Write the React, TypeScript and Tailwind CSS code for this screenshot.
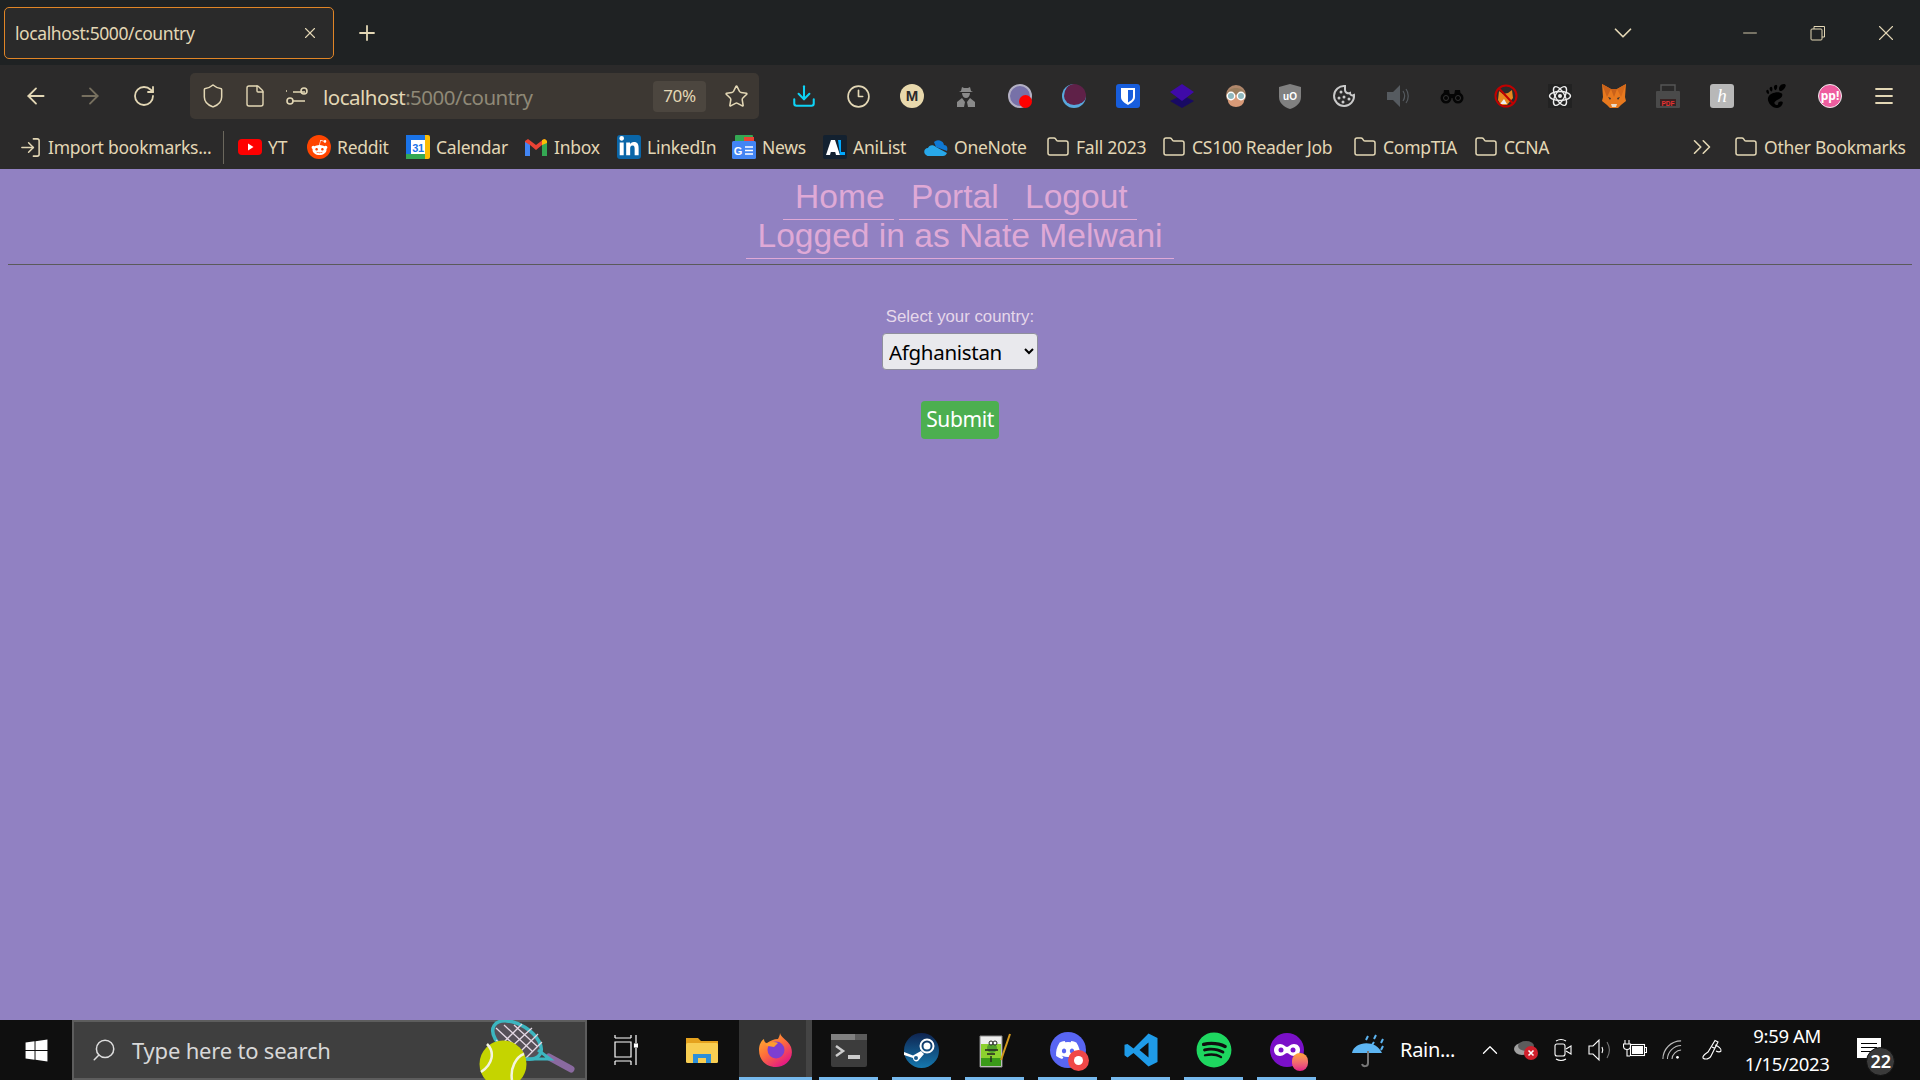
import { ArrowLeft, ArrowRight, RotateCw, Shield, File, Star, Download, Clock3, Menu, Plus, X, Minus, ChevronDown, ChevronsRight, Folder, LogIn, Search, ChevronUp } from 'lucide-react';
import { FaDiscord, FaRedditAlien, FaSpotify, FaWindows, FaLinkedinIn } from 'react-icons/fa';
import { SiGnome } from 'react-icons/si';

const CREAM = '#e3d7b5';

function Svg({ size = 24, children }: { size?: number; children: React.ReactNode }) {
  return <svg width={size} height={size} viewBox="0 0 24 24" fill="none">{children}</svg>;
}

function Bookmark({ icon, label, width }: { icon: React.ReactNode; label: string; width: number }) {
  return (
    <div className="flex items-center gap-[6px] shrink-0">
      <span className="w-[24px] h-[24px] flex items-center justify-center">{icon}</span>
      <span className="whitespace-nowrap" style={{ width }}>{label}</span>
    </div>
  );
}

const folder = <Folder size={24} strokeWidth={1.5} color={CREAM} />;

function TaskSlot({ children, active }: { children: React.ReactNode; active?: boolean }) {
  return (
    <div className={active ? 'relative w-[73px] h-full flex items-center justify-center bg-[#333333]' : 'relative w-[73px] h-full flex items-center justify-center'}>
      {children}
      <div className={active ? 'absolute bottom-0 left-0 right-0 h-[3px] bg-[#76b9ed]' : 'absolute bottom-0 left-[7px] right-[7px] h-[3px] bg-[#76b9ed]'} />
    </div>
  );
}

const ToolIcon = ({ children }: { children: React.ReactNode }) => (
  <div className="w-[54px] flex items-center justify-center shrink-0">{children}</div>
);

export default function App() {
  return (
    <div className="w-[1920px] h-[1080px] flex flex-col overflow-hidden font-['Noto_Sans',sans-serif]" style={{ color: CREAM }}>
      {/* tab strip */}
      <div className="h-[65px] shrink-0 bg-[#1f2223] flex items-center pl-[4px]">
        <div className="w-[330px] h-[52px] rounded-[5px] border border-[#e08526] bg-[#2a2a2a] flex items-center pl-[10px] pr-[14px] justify-between mt-[1px]">
          <span className="text-[17.5px] tracking-[-0.4px]">localhost:5000/country</span>
          <X size={18} strokeWidth={1.5} />
        </div>
        <div className="ml-[21px]"><Plus size={24} strokeWidth={1.8} /></div>
        <div className="ml-auto flex items-center">
          <ChevronDown size={30} strokeWidth={1.4} />
          <div className="w-[68px] ml-[78px] flex justify-center"><Minus size={22} strokeWidth={1} /></div>
          <div className="w-[68px] flex justify-center">
            <svg width="16" height="16" viewBox="0 0 16 16" fill="none" stroke={CREAM}><rect x="1" y="4" width="11" height="11" rx="1" /><path d="M4 4V1.5h10.5V12H12" /></svg>
          </div>
          <div className="w-[68px] flex justify-center"><X size={26} strokeWidth={1} /></div>
        </div>
      </div>

      {/* toolbar */}
      <div className="h-[62px] shrink-0 bg-[#2b2a2a] flex items-center pl-[9px]">
        <ToolIcon><ArrowLeft size={26} strokeWidth={1.7} /></ToolIcon>
        <ToolIcon><ArrowRight size={26} strokeWidth={1.7} color="#77705f" /></ToolIcon>
        <ToolIcon><RotateCw size={24} strokeWidth={1.8} /></ToolIcon>
        <div className="ml-[19px] w-[569px] h-[46px] shrink-0 rounded-[5px] bg-[#3d3833] flex items-center pl-[2px]">
          <div className="w-[42px] flex justify-center"><Shield size={26} strokeWidth={1.4} /></div>
          <div className="w-[42px] flex justify-center"><File size={24} strokeWidth={1.4} /></div>
          <div className="w-[42px] flex justify-center">
            <svg width="24" height="24" viewBox="0 0 24 24" fill="none" stroke={CREAM} strokeWidth="1.6"><path d="M2 9h12M2 18h12" transform="translate(6 -1)" /><circle cx="19" cy="7" r="3" /><circle cx="5" cy="17" r="3" /><path d="M1 7h1" /></svg>
          </div>
          <span className="ml-[5px] pt-[3px] text-[20.5px] tracking-[-0.5px] whitespace-nowrap">localhost<span className="text-[#8f8977]">:5000/country</span></span>
          <div className="ml-auto w-[53px] h-[31px] rounded-[4px] bg-[#4c463f] flex items-center justify-center text-[17px] tracking-[-0.3px]">70%</div>
          <div className="w-[53px] flex justify-center pl-[7px]"><Star size={25} strokeWidth={1.5} /></div>
        </div>
        <div className="ml-[18px] flex items-center">
          <ToolIcon><Download size={26} strokeWidth={1.9} color="#0ed2f5" /></ToolIcon>
          <ToolIcon><Clock3 size={25} strokeWidth={1.6} /></ToolIcon>
          <ToolIcon>
            <div className="w-[24px] h-[24px] rounded-full bg-[#e8d8ac] flex items-center justify-center text-[#2b2a2a] text-[15px] font-bold font-['Liberation_Sans',sans-serif]">M</div>
          </ToolIcon>
          <ToolIcon>
            <Svg><g fill="#8a8a8a"><path d="M7 7l1-4 2 1h4l2-1 1 4 2 1H5z" /><path d="M8 9h8c0 3-2 5-4 5s-4-2-4-5z" /><path d="M3 23v-5l5-4 3 4-1 5zM21 23v-5l-5-4-3 4 1 5z" /></g></Svg>
          </ToolIcon>
          <ToolIcon>
            <div className="relative w-[24px] h-[24px] rounded-full bg-[#7771a8] border-2 border-[#b3b0c4] blur-[0.6px]">
              <div className="absolute right-[-2px] bottom-[-2px] w-[13px] h-[13px] rounded-full bg-[#ff0000]" />
            </div>
          </ToolIcon>
          <ToolIcon>
            <div className="w-[24px] h-[24px] rounded-full bg-[#5f2148] border-b-[3px] border-l-[2px] border-b-[#58a8dc] border-l-[#58a8dc] blur-[0.5px]" />
          </ToolIcon>
          <ToolIcon>
            <Svg><rect width="24" height="24" rx="3" fill="#175ddc" /><path d="M5 4h14v9c0 4-4 6-7 8-3-2-7-4-7-8z" fill="#fff" /><path d="M12 6h5v7c0 2.500-2.500 4-5 5.500z" fill="#175ddc" /></Svg>
          </ToolIcon>
          <ToolIcon>
            <Svg><path d="M12 11l12 6-12 7-12-7z" fill="#180a63" /><path d="M12 0l12 8-12 9L0 8z" fill="#3f0aa8" /></Svg>
          </ToolIcon>
          <ToolIcon>
            <Svg><circle cx="12" cy="11" r="10" fill="#b0876b" /><path d="M3 10C4 2 20 2 21 10z" fill="#9a7d5e" /><ellipse cx="12" cy="17" rx="8" ry="6" fill="#d89a78" /><circle cx="7" cy="12" r="3.700" fill="#8fb7bd" stroke="#fff" strokeWidth="1.400" /><circle cx="17" cy="12" r="3.700" fill="#8fb7bd" stroke="#fff" strokeWidth="1.400" /></Svg>
          </ToolIcon>
          <ToolIcon>
            <svg width="22" height="25" viewBox="0 0 22 25"><path d="M11 0l11 3v10c0 6-5 10-11 12C5 23 0 19 0 13V3z" fill="#808080" /><text x="11" y="16" textAnchor="middle" fill="#fff" fontSize="10" fontWeight="700" fontFamily="Liberation Sans">uO</text></svg>
          </ToolIcon>
          <ToolIcon>
            <Svg><path d="M13 2a10 10 0 1 0 9 9c-2 1-4 0-4-2-3 1-5-1-5-3z" stroke="#c9c9c9" strokeWidth="2" /><g fill="#c9c9c9"><circle cx="9" cy="8" r="1.500" /><circle cx="7" cy="14" r="1.500" /><circle cx="12" cy="13" r="1.500" /><circle cx="11" cy="18" r="1.500" /><circle cx="17" cy="15" r="1.500" /></g></Svg>
          </ToolIcon>
          <ToolIcon>
            <Svg><path d="M1 8h6l7-7v22l-7-7H1z" fill="#565b60" /><path d="M17 7c2 3 2 7 0 10M20 5c3 4 3 10 0 14" stroke="#565b60" strokeWidth="1.200" /></Svg>
          </ToolIcon>
          <ToolIcon>
            <Svg><g fill="#050505"><circle cx="6" cy="14" r="5.500" /><circle cx="18" cy="14" r="5.500" /><path d="M4 6h5l1 6H3zM15 6h5l1 6h-7zM9 10h6v4H9z" /></g><circle cx="6" cy="14" r="2.500" stroke="#333" /><circle cx="18" cy="14" r="2.500" stroke="#333" /></Svg>
          </ToolIcon>
          <ToolIcon>
            <Svg><path d="M5 7l4 3 5-1 4-3 1 8-6 7H7l-3-5z" fill="#e8871f" /><path d="M6 20l4-5 3 5z" fill="#eee" /><circle cx="12" cy="12" r="10.500" stroke="#c00000" strokeWidth="2" /><path d="M5 4.500l14 15" stroke="#c00000" strokeWidth="2" /></Svg>
          </ToolIcon>
          <ToolIcon>
            <Svg><rect width="24" height="24" fill="#222" /><g stroke="#eee" strokeWidth="1.400"><ellipse cx="12" cy="12" rx="10.500" ry="4.500" /><ellipse cx="12" cy="12" rx="10.500" ry="4.500" transform="rotate(60 12 12)" /><ellipse cx="12" cy="12" rx="10.500" ry="4.500" transform="rotate(120 12 12)" /></g><circle cx="12" cy="12" r="2" fill="#eee" /></Svg>
          </ToolIcon>
          <ToolIcon>
            <Svg><path d="M0 0l9 5h6l9-5-1 13 1 4-5 4-3 3H8l-3-3-5-4 1-4z" fill="#e8791e" /><path d="M9 5h6l-3 8zM0 0l9 5-4 8z" fill="#c9611a" /><path d="M15 5l9-5-5 13z" fill="#d5691a" /><path d="M9 20h6l-1 3h-4z" fill="#e9dccb" /><path d="M6 13l3 1-1 2zM18 13l-3 1 1 2z" fill="#333" /></Svg>
          </ToolIcon>
          <ToolIcon>
            <Svg><path d="M5 7V1h14v6" stroke="#565656" strokeWidth="1.400" /><rect y="7" width="24" height="17" rx="1" fill="#4a4a4a" /><rect x="4" y="15" width="16" height="7" fill="#3a2222" /><text x="12" y="21.500" textAnchor="middle" fill="#e63333" fontSize="6.500" fontWeight="700" fontFamily="Liberation Sans">PDF</text></Svg>
          </ToolIcon>
          <ToolIcon>
            <div className="w-[24px] h-[24px] rounded-[3px] bg-[#b8b8b8] flex items-center justify-center text-white text-[19px] italic font-['Liberation_Serif',serif]">h</div>
          </ToolIcon>
          <ToolIcon><SiGnome size={24} color="#000" /></ToolIcon>
          <ToolIcon>
            <div className="w-[24px] h-[24px] rounded-full bg-[#ee5d9f] border border-[#eee] flex items-center justify-center text-white text-[12px] font-bold leading-none">pp!</div>
          </ToolIcon>
          <ToolIcon><Menu size={24} strokeWidth={1.8} /></ToolIcon>
        </div>
      </div>

      {/* bookmarks */}
      <div className="h-[42px] shrink-0 bg-[#2b2a2a] flex items-center pl-[18px] pr-[18px] text-[17.5px] tracking-[-0.25px] pb-[2px]">
        <Bookmark icon={<LogIn size={23} strokeWidth={1.6} />} label="Import bookmarks..." width={160} />
        <div className="w-px h-[33px] bg-[#6b675d] ml-[15px] mr-[14px] shrink-0" />
        <div className="flex items-center gap-[18px]">
          <Bookmark
            label="YT"
            width={21}
            icon={<Svg><rect y="4" width="24" height="16" rx="4" fill="#ff0000" /><path d="M10 8.500l5.500 3.500-5.500 3.500z" fill="#fff" /></Svg>}
          />
          <Bookmark
            label="Reddit"
            width={51}
            icon={<div className="w-[24px] h-[24px] rounded-full bg-[#ff4500] flex items-center justify-center"><FaRedditAlien size={17} color="#fff" /></div>}
          />
          <Bookmark
            label="Calendar"
            width={70}
            icon={<Svg><rect width="24" height="24" rx="2" fill="#fbbc04" /><rect x="0" y="0" width="19" height="5" fill="#1a73e8" /><rect x="0" y="0" width="5" height="20" fill="#1a73e8" /><rect x="0" y="19" width="19" height="5" fill="#34a853" /><rect x="5" y="5" width="14" height="14" fill="#fff" /><text x="12" y="16.500" textAnchor="middle" fill="#1a73e8" fontSize="11" fontWeight="700" fontFamily="Liberation Sans">31</text></Svg>}
          />
          <Bookmark
            label="Inbox"
            width={45}
            icon={<Svg><path d="M1 6v15h5V10l6 5 6-5v11h5V6l-3-2-8 6-8-6z" fill="#ea4335" /><path d="M1 7v14h5V10z" fill="#4285f4" /><path d="M23 7v14h-5V10z" fill="#34a853" /><path d="M18 10V5l3-1 2 2v2z" fill="#fbbc04" /></Svg>}
          />
          <Bookmark
            label="LinkedIn"
            width={67}
            icon={<div className="w-[24px] h-[24px] rounded-[3px] bg-[#0a66a8] flex items-center justify-center"><FaLinkedinIn size={22} color="#fff" /></div>}
          />
          <Bookmark
            label="News"
            width={43}
            icon={<Svg><rect x="3" y="0" width="18" height="8" rx="1" fill="#34a853" /><rect x="12" y="2" width="10" height="6" fill="#ea4335" /><rect y="6" width="24" height="18" rx="1.500" fill="#4285f4" /><text x="6" y="20" textAnchor="middle" fill="#fff" fontSize="11" fontWeight="700" fontFamily="Liberation Sans">G</text><path d="M13 12h8M13 15.500h8M13 19h8" stroke="#fff" strokeWidth="1.700" /></Svg>}
          />
          <Bookmark
            label="AniList"
            width={53}
            icon={<Svg><rect width="24" height="24" rx="2" fill="#132130" /><path d="M3 20l5-15h4l5 15h-4l-.8-3H7.800L7 20z" fill="#fff" /><path d="M15 5h3v12h4v3h-5z" fill="#02a9ff" /></Svg>}
          />
          <Bookmark
            label="OneNote"
            width={74}
            icon={<Svg><path d="M10 7a6 6 0 0 1 10 3c3 0 4 3 3 6L12 12z" fill="#0f78d4" /><path d="M2 20c-3-2-2-7 2-7 1-3 5-4 8-1l11 6c-1 2-2 3-4 3H5c-1 0-2 0-3-1z" fill="#28a8ea" /></Svg>}
          />
          <Bookmark icon={folder} label="Fall 2023" width={68} />
          <Bookmark icon={folder} label="CS100 Reader Job" width={143} />
          <Bookmark icon={folder} label="CompTIA" width={73} />
          <Bookmark icon={folder} label="CCNA" width={47} />
        </div>
        <div className="ml-auto flex items-center">
          <ChevronsRight size={30} strokeWidth={1.3} />
          <div className="ml-[17px]"><Bookmark icon={folder} label="Other Bookmarks" width={138} /></div>
        </div>
      </div>

      {/* page */}
      <main className="flex-1 bg-[#9181c2] font-['Liberation_Sans',sans-serif]">
        <div className="pt-[12px] text-[33.6px] leading-[32px] text-[#dfa9d6] flex flex-col items-center">
          <div className="flex gap-[5px]">
            <a className="px-[12px] pb-[6px] border-b border-[#dfa9d6] w-[111px]">Home</a>
            <a className="px-[12px] pb-[6px] border-b border-[#dfa9d6] w-[109px]">Portal</a>
            <a className="px-[12px] pb-[6px] border-b border-[#dfa9d6] w-[124px]">Logout</a>
          </div>
          <a className="pb-[6px] border-b border-[#dfa9d6] w-[428px] text-center whitespace-nowrap">Logged in as Nate Melwani</a>
        </div>
        <hr className="mt-[5px] mx-[8px] border-t border-[#5a5a5a]" />
        <form className="mt-[43px] flex flex-col items-center">
          <label className="text-[16.8px] leading-[18px] text-[#e6d8ea]">Select your country:</label>
          <select className="mt-[7px] w-[156px] h-[37px] rounded-[4px] bg-[#e9e9ed] border border-[#8f8f9d] pl-[2px] text-black text-[20.5px] tracking-[-0.3px] font-['Noto_Sans',sans-serif]">
            <option>Afghanistan</option>
          </select>
          <button type="button" className="mt-[31px] w-[78px] h-[38px] rounded-[4px] bg-[#4caf50] text-white text-[21px] tracking-[-0.4px] font-['Noto_Sans',sans-serif]">Submit</button>
        </form>
      </main>

      {/* windows taskbar */}
      <footer className="h-[60px] shrink-0 bg-[#0f0f0f] flex items-stretch text-white">
        <div className="w-[72px] flex items-center justify-center"><FaWindows size={25} /></div>
        <div className="relative w-[515px] border-2 border-[#5d5d5d] bg-[#3f3f3f] flex items-center pl-[17px]">
          <Search size={26} strokeWidth={1.4} className="text-[#dddddd] -scale-x-100" />
          <span className="ml-[15px] text-[22px] tracking-[-0.2px] text-[#d8d8d8] whitespace-nowrap">Type here to search</span>
          <svg className="absolute right-[-2px] top-[-2px]" width="115" height="60" viewBox="0 0 115 60" fill="none">
            <path d="M77 37l22 12" stroke="#8a6aa0" strokeWidth="7" strokeLinecap="round" />
            <ellipse cx="45" cy="20" rx="27" ry="15" transform="rotate(32 45 20)" fill="#565058" stroke="#3cb6c0" strokeWidth="3.500" />
            <path d="M24 8l28 26M32 5l28 26M42 5l24 22M24 20l20 16M30 24L50 4M36 30L60 8M46 34L66 14M54 38L70 22" stroke="#e4d8e4" strokeWidth="1.300" />
            <path d="M66 30l12 9-24 0" stroke="#3cb6c0" strokeWidth="3" />
            <circle cx="31" cy="44" r="23.500" fill="#c5d400" />
            <path d="M15 24c8 8 6 20-6 28M52 34c-8 3-14 14-12 26" stroke="#f4f4e0" strokeWidth="2.500" />
          </svg>
        </div>
        <div className="w-[77px] flex items-center justify-center">
          <svg width="24" height="32" viewBox="0 0 24 32" fill="none" stroke="#fff" strokeWidth="1.200"><path d="M1 4h16M1 1v3M17 1v3M1 8h16v15H1zM1 27h16M1 27v4M17 27v4M22 1v8M22 14v17" /><rect x="20.500" y="10" width="3" height="3" fill="#fff" /></svg>
        </div>
        <div className="w-[75px] flex items-center justify-center">
          <svg width="34" height="32" viewBox="0 0 34 32"><path d="M1 4h12l3 3h17v6H1z" fill="#e5a21e" /><rect x="1" y="9" width="32" height="20" rx="1.500" fill="#f8ce52" /><path d="M8 29v-9h18v9h-5v-5h-8v5z" fill="#2c8fd9" /></svg>
        </div>
        <TaskSlot active>
          <svg width="36" height="38" viewBox="0 0 36 36">
            <defs>
              <linearGradient id="ff" x1="0" y1="0" x2="0.700" y2="1"><stop offset="0" stopColor="#ffbd2e" /><stop offset="0.500" stopColor="#ff7139" /><stop offset="1" stopColor="#e31587" /></linearGradient>
            </defs>
            <path d="M22 1c1 5 8 7 11 14 4 12-6 20-15 20C8 35 1 28 1 18c0-5 2-9 5-11 0 2 1 4 3 4 3-2 7-4 11-4 1-2 2-4 2-6z" fill="url(#ff)" />
            <circle cx="18" cy="18" r="8.500" fill="#7d3fd1" />
            <path d="M7 13c4-3 9-4 13-2l-4 4-6-1z" fill="#ff9d2e" />
          </svg>
          <div className="absolute right-0 top-0 bottom-0 w-[6px] bg-[#444444]" />
        </TaskSlot>
        <TaskSlot>
          <svg width="36" height="33" viewBox="0 0 36 33"><rect width="36" height="33" rx="2" fill="#3c3c3c" /><rect width="24" height="6" fill="#808080" /><rect x="24" width="12" height="6" fill="#5c5c5c" /><path d="M5 12l7 5-7 5" fill="none" stroke="#ccc" strokeWidth="2.500" /><rect x="17" y="21" width="12" height="4" fill="#ccc" /></svg>
        </TaskSlot>
        <TaskSlot>
          <svg width="35" height="35" viewBox="0 0 35 35">
            <defs>
              <linearGradient id="st" x1="0" y1="0" x2="0" y2="1"><stop offset="0" stopColor="#0f2450" /><stop offset="1" stopColor="#1578ae" /></linearGradient>
            </defs>
            <circle cx="17.500" cy="17.500" r="17.500" fill="url(#st)" />
            <circle cx="23" cy="13" r="6.500" fill="none" stroke="#fff" strokeWidth="2" />
            <circle cx="23" cy="13" r="3.500" fill="#fff" />
            <path d="M0 19l9 3.500L17 18l3 3-6 7c-2 1-5 0-5-3L0 22z" fill="#fff" />
            <circle cx="12" cy="25" r="2" fill="#1a5d8e" />
          </svg>
        </TaskSlot>
        <TaskSlot>
          <svg width="34" height="36" viewBox="0 0 34 36"><path d="M2 4h22v31H2z" fill="#eee" stroke="#888" /><path d="M3 12h20v14H3z" fill="#8cd12e" /><path d="M3 26h20v8H3z" fill="#3a9a18" /><circle cx="14" cy="16" r="5" fill="#53a02c" /><circle cx="13" cy="11" r="2" fill="#fff" stroke="#222" /><circle cx="17" cy="11" r="2" fill="#fff" stroke="#222" /><path d="M7 18h13M9 22h8M13 24v6" stroke="#222" strokeWidth="1.400" /><path d="M23 28l9-26" stroke="#d49a1e" strokeWidth="2" /></svg>
        </TaskSlot>
        <TaskSlot>
          <div className="relative w-[36px] h-[36px] rounded-full bg-[#5865f2] flex items-center justify-center">
            <FaDiscord size={26} color="#fff" />
            <div className="absolute right-[-3px] bottom-[-3px] w-[21px] h-[21px] rounded-full bg-[#f04747] flex items-center justify-center">
              <div className="w-[9px] h-[9px] rounded-full bg-white" />
            </div>
          </div>
        </TaskSlot>
        <TaskSlot>
          <svg width="36" height="36" viewBox="0 0 24 24"><path d="M17 1l6 3v16l-6 3-10-9-4 3-2-1.500v-7L3 8l4 3zM17 7l-6 5 6 5z" fill="#1f9be8" fillRule="evenodd" /></svg>
        </TaskSlot>
        <TaskSlot><FaSpotify size={36} color="#1ed760" /></TaskSlot>
        <TaskSlot>
          <div className="relative w-[34px] h-[34px] rounded-full bg-[#7a10c8] flex items-center justify-center">
            <svg width="26" height="14" viewBox="0 0 26 14"><path d="M6 1c4 0 5 3 7 3s3-3 7-3 6 3 6 6-2 6-6 6-5-3-7-3-3 3-7 3-6-3-6-6 2-6 6-6z" fill="#fff" /><circle cx="7" cy="7" r="2.500" fill="#7a10c8" /><circle cx="19" cy="7" r="2.500" fill="#7a10c8" /></svg>
            <div className="absolute right-[-4px] bottom-[-4px] w-[16px] h-[18px] rounded-full bg-gradient-to-b from-[#ffa52e] to-[#e31587]" />
          </div>
        </TaskSlot>
        <div className="ml-[27px] flex items-center">
          <svg width="38" height="38" viewBox="0 0 38 38" fill="none"><path d="M2 22C4 10 26 8 32 22z" fill="#5db5f2" /><path d="M18 20v12c0 4-5 4-6 1" stroke="#777" strokeWidth="2" /><path d="M18 5l-2 4M26 4l-2 4M33 8l-2 4M24 11l-2 3M33 15l-2 4" stroke="#5db5f2" strokeWidth="2" /></svg>
          <span className="ml-[12px] text-[20px] tracking-[-0.3px]">Rain...</span>
          <div className="ml-[17px] w-[36px] flex justify-center"><ChevronUp size={26} strokeWidth={1.2} /></div>
          <div className="w-[36px] flex justify-center">
            <svg width="24" height="20" viewBox="0 0 24 20"><ellipse cx="8" cy="9" rx="8" ry="6" fill="#a0a0a0" /><ellipse cx="12" cy="6" rx="8" ry="5" fill="#5c5c5c" /><circle cx="17" cy="13" r="7" fill="#d0202c" /><path d="M14.500 10.500l5 5M19.500 10.500l-5 5" stroke="#fff" strokeWidth="1.600" /></svg>
          </div>
          <div className="w-[38px] flex justify-center">
            <svg width="18" height="24" viewBox="0 0 18 24" fill="none" stroke="#fff" strokeWidth="1.100"><rect x="1" y="6" width="10" height="12" rx="2" /><path d="M12 11l5-3v8l-5-3M2 3q5-3 10 0M2 21q5 3 10 0" /></svg>
          </div>
          <div className="w-[34px] flex justify-center">
            <svg width="23" height="24" viewBox="0 0 23 24" fill="none" stroke="#fff" strokeWidth="1.100"><path d="M1 8h4l6-6v20l-6-6H1zM14 9c1 2 1 4 0 6" /><path d="M19 4c3 5 3 11 0 16" stroke="#777" /></svg>
          </div>
          <div className="w-[38px] flex justify-center">
            <svg width="24" height="20" viewBox="0 0 24 20" fill="none" stroke="#fff" strokeWidth="1.100"><rect x="7.500" y="4.500" width="14" height="11" /><rect x="9" y="6" width="11" height="8" fill="#fff" stroke="none" /><path d="M22 7.500h1.500v5H22M2 0v4M6 0v4M.5 4h7v2a3.500 3.500 0 0 1-7 0zM4 9.500V16h3" /></svg>
          </div>
          <div className="w-[35px] flex justify-center">
            <svg width="20" height="20" viewBox="0 0 22 22" fill="none" stroke="#bbb" strokeWidth="1.200"><path d="M1 21C1 10 10 1 21 1M6 21c0-8 7-15 15-15M11 21c0-5 5-10 10-10" /><circle cx="17" cy="19" r="1.500" fill="#fff" stroke="none" /></svg>
          </div>
          <div className="w-[46px] flex justify-center">
            <svg width="22" height="22" viewBox="0 0 22 22" fill="none" stroke="#fff" strokeWidth="1.100"><path d="M14 1.500l3 1.500-7 14c-1 3-6 4-8 2-1-2 2-4 5-6zM11 8l3 1.500M14 6c3 1 7 4 6 6-1 1-3 1-5 0" /></svg>
          </div>
          <div className="w-[104px] flex flex-col items-center text-[18.5px] leading-[28px] tracking-[-0.35px] whitespace-nowrap">
            <span>9:59 AM</span>
            <span>1/15/2023</span>
          </div>
          <div className="relative ml-[18px] w-[24px] h-[20px] bg-white flex flex-col justify-center gap-[3px] px-[4px] -mt-[5px]">
            <div className="h-px bg-black" /><div className="h-px bg-black" /><div className="h-px bg-black" />
            <div className="absolute left-[9px] top-[9px] w-[29px] h-[29px] rounded-full bg-[#3a3a3a] border border-[#111] flex items-center justify-center text-[18px] font-semibold text-white">22</div>
          </div>
        </div>
      </footer>
    </div>
  );
}
